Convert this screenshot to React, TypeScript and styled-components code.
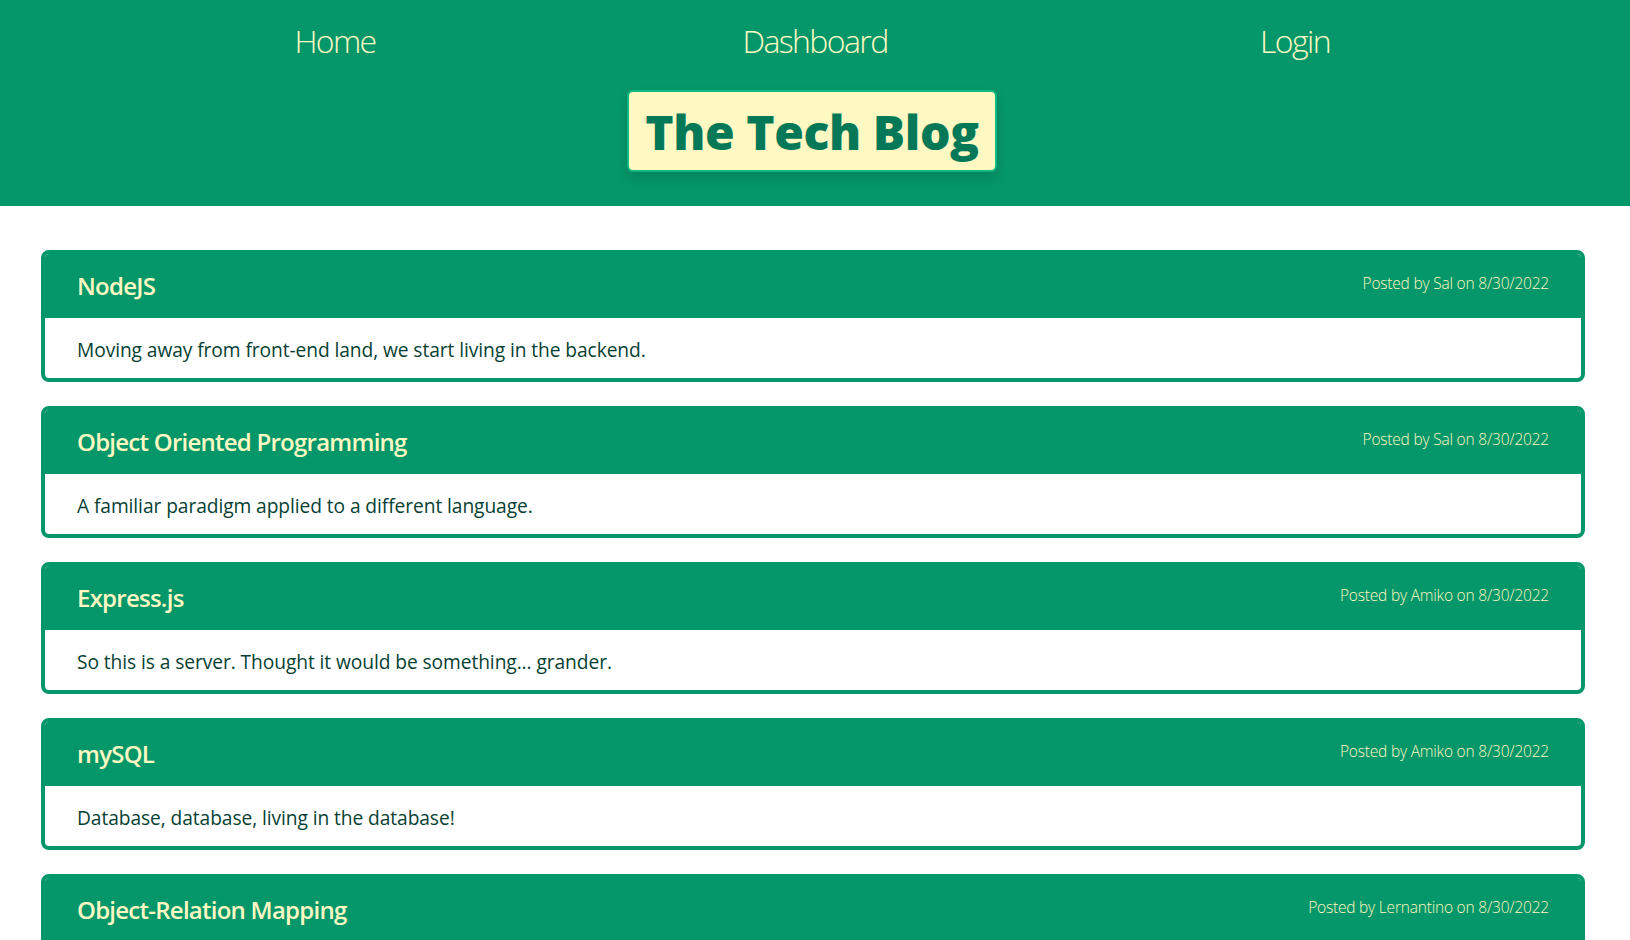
import React from "react";
import styled, { createGlobalStyle } from "styled-components";

const GlobalStyle = createGlobalStyle`
  html, body {
    margin: 0;
    padding: 0;
    background: #ffffff;
    font-family: "Open Sans", "Noto Sans", sans-serif;
  }
  * { box-sizing: border-box; }
`;

const Header = styled.header`
  background: #059669;
  height: 206px;
  padding-top: 17px;
  display: flex;
  flex-direction: column;
  align-items: center;
`;

const Nav = styled.nav`
  display: grid;
  grid-template-columns: repeat(3, 480px);
  justify-content: center;
  width: 100%;
`;

const NavLink = styled.a`
  text-align: center;
  font-size: 32px;
  line-height: 48px;
  font-weight: 300;
  color: #fef9c3;
  text-decoration: none;
  letter-spacing: -1.6px;
`;

const TitleBox = styled.div`
  margin-top: 25px;
  margin-right: 6px;
  height: 82px;
  padding: 0 16px;
  background: #fef9c3;
  border: 2px solid #10b981;
  border-radius: 6px;
  box-shadow: 0 6px 12px rgba(0, 0, 0, 0.12);
`;

const Title = styled.h1`
  margin: 0;
  font-size: 48px;
  line-height: 80px;
  font-weight: 800;
  color: #047857;
  letter-spacing: -0.4px;
`;

const Main = styled.main`
  padding: 44px 45px 40px 41px;
  display: flex;
  flex-direction: column;
  gap: 24px;
`;

const Card = styled.article`
  border: 4px solid #059669;
  border-radius: 8px;
  overflow: hidden;
  background: #ffffff;
`;

const CardHead = styled.div`
  background: #059669;
  padding: 16px 32px;
  display: flex;
  justify-content: space-between;
  align-items: flex-start;
`;

const CardTitle = styled.h2`
  margin: 0;
  font-size: 24px;
  line-height: 32px;
  font-weight: 600;
  color: #fef9c3;
  letter-spacing: -0.75px;
`;

const Meta = styled.span`
  font-size: 15.5px;
  line-height: 26px;
  font-weight: 300;
  color: #fef9c3;
  letter-spacing: -0.2px;
`;

const CardBody = styled.p`
  margin: 0;
  padding: 18px 32px 14px;
  font-size: 19.2px;
  line-height: 28px;
  font-weight: 400;
  color: #073f33;
  letter-spacing: -0.08px;
`;

const posts = [
  { title: "NodeJS", author: "Sal", body: "Moving away from front-end land, we start living in the backend." },
  { title: "Object Oriented Programming", author: "Sal", body: "A familiar paradigm applied to a different language." },
  { title: "Express.js", author: "Amiko", body: "So this is a server. Thought it would be something... grander." },
  { title: "mySQL", author: "Amiko", body: "Database, database, living in the database!" },
  { title: "Object-Relation Mapping", author: "Lernantino", body: "" },
];

export default function App() {
  return (
    <>
      <GlobalStyle />
      <Header>
        <Nav>
          <NavLink href="#">Home</NavLink>
          <NavLink href="#">Dashboard</NavLink>
          <NavLink href="#">Login</NavLink>
        </Nav>
        <TitleBox>
          <Title>The Tech Blog</Title>
        </TitleBox>
      </Header>
      <Main>
        {posts.map((p) => (
          <Card key={p.title}>
            <CardHead>
              <CardTitle>{p.title}</CardTitle>
              <Meta>Posted by {p.author} on 8/30/2022</Meta>
            </CardHead>
            <CardBody>{p.body || "\u00a0"}</CardBody>
          </Card>
        ))}
      </Main>
    </>
  );
}
